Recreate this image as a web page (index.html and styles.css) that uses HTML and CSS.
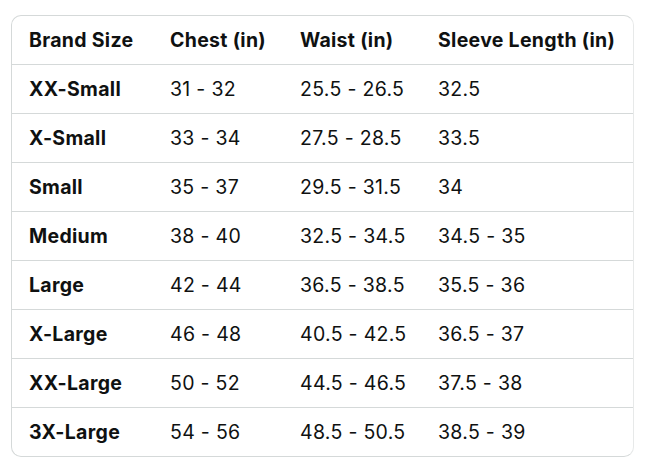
FILE: index.html
```html
<!DOCTYPE html>
<html>
<head>
<meta charset="utf-8">
<link rel="stylesheet" href="styles.css">
</head>
<body>
<div class="card">
<table class="size-table">
<thead>
<tr><th class="c1">Brand Size</th><th class="c2">Chest (in)</th><th class="c3">Waist (in)</th><th class="c4">Sleeve Length (in)</th></tr>
</thead>
<tbody>
<tr><th>XX-Small</th><td>31 - 32</td><td>25.5 - 26.5</td><td>32.5</td></tr>
<tr><th>X-Small</th><td>33 - 34</td><td>27.5 - 28.5</td><td>33.5</td></tr>
<tr><th>Small</th><td>35 - 37</td><td>29.5 - 31.5</td><td>34</td></tr>
<tr><th>Medium</th><td>38 - 40</td><td>32.5 - 34.5</td><td>34.5 - 35</td></tr>
<tr><th>Large</th><td>42 - 44</td><td>36.5 - 38.5</td><td>35.5 - 36</td></tr>
<tr><th>X-Large</th><td>46 - 48</td><td>40.5 - 42.5</td><td>36.5 - 37</td></tr>
<tr><th>XX-Large</th><td>50 - 52</td><td>44.5 - 46.5</td><td>37.5 - 38</td></tr>
<tr><th>3X-Large</th><td>54 - 56</td><td>48.5 - 50.5</td><td>38.5 - 39</td></tr>
</tbody>
</table>
</div>
</body>
</html>
```
FILE: styles.css
```css
html, body {
  margin: 0;
  background: #ffffff;
}
body {
  padding: 15px 15px 0 11px;
  font-family: "Inter", "Noto Sans", sans-serif;
  color: #0f1111;
}
.card {
  width: 621px;
  border: 1px solid #d5d9d9;
  border-right-color: #e7e9e9;
  border-radius: 10px;
  overflow: hidden;
}
.size-table {
  width: 100%;
  border-collapse: collapse;
  font-size: 19.5px;
  letter-spacing: 0.3px;
}
.size-table th,
.size-table td {
  height: 48px;
  padding: 0 0 0 17px;
  text-align: left;
  vertical-align: middle;
  border-bottom: 1px solid #d5d9d9;
  white-space: nowrap;
}
.size-table th { font-weight: 700; }
.size-table td { font-weight: 400; }
.size-table tbody tr:last-child th,
.size-table tbody tr:last-child td {
  border-bottom: none;
}
.c1 { width: 124px; }
.c2 { width: 113px; }
.c3 { width: 121px; }
```
